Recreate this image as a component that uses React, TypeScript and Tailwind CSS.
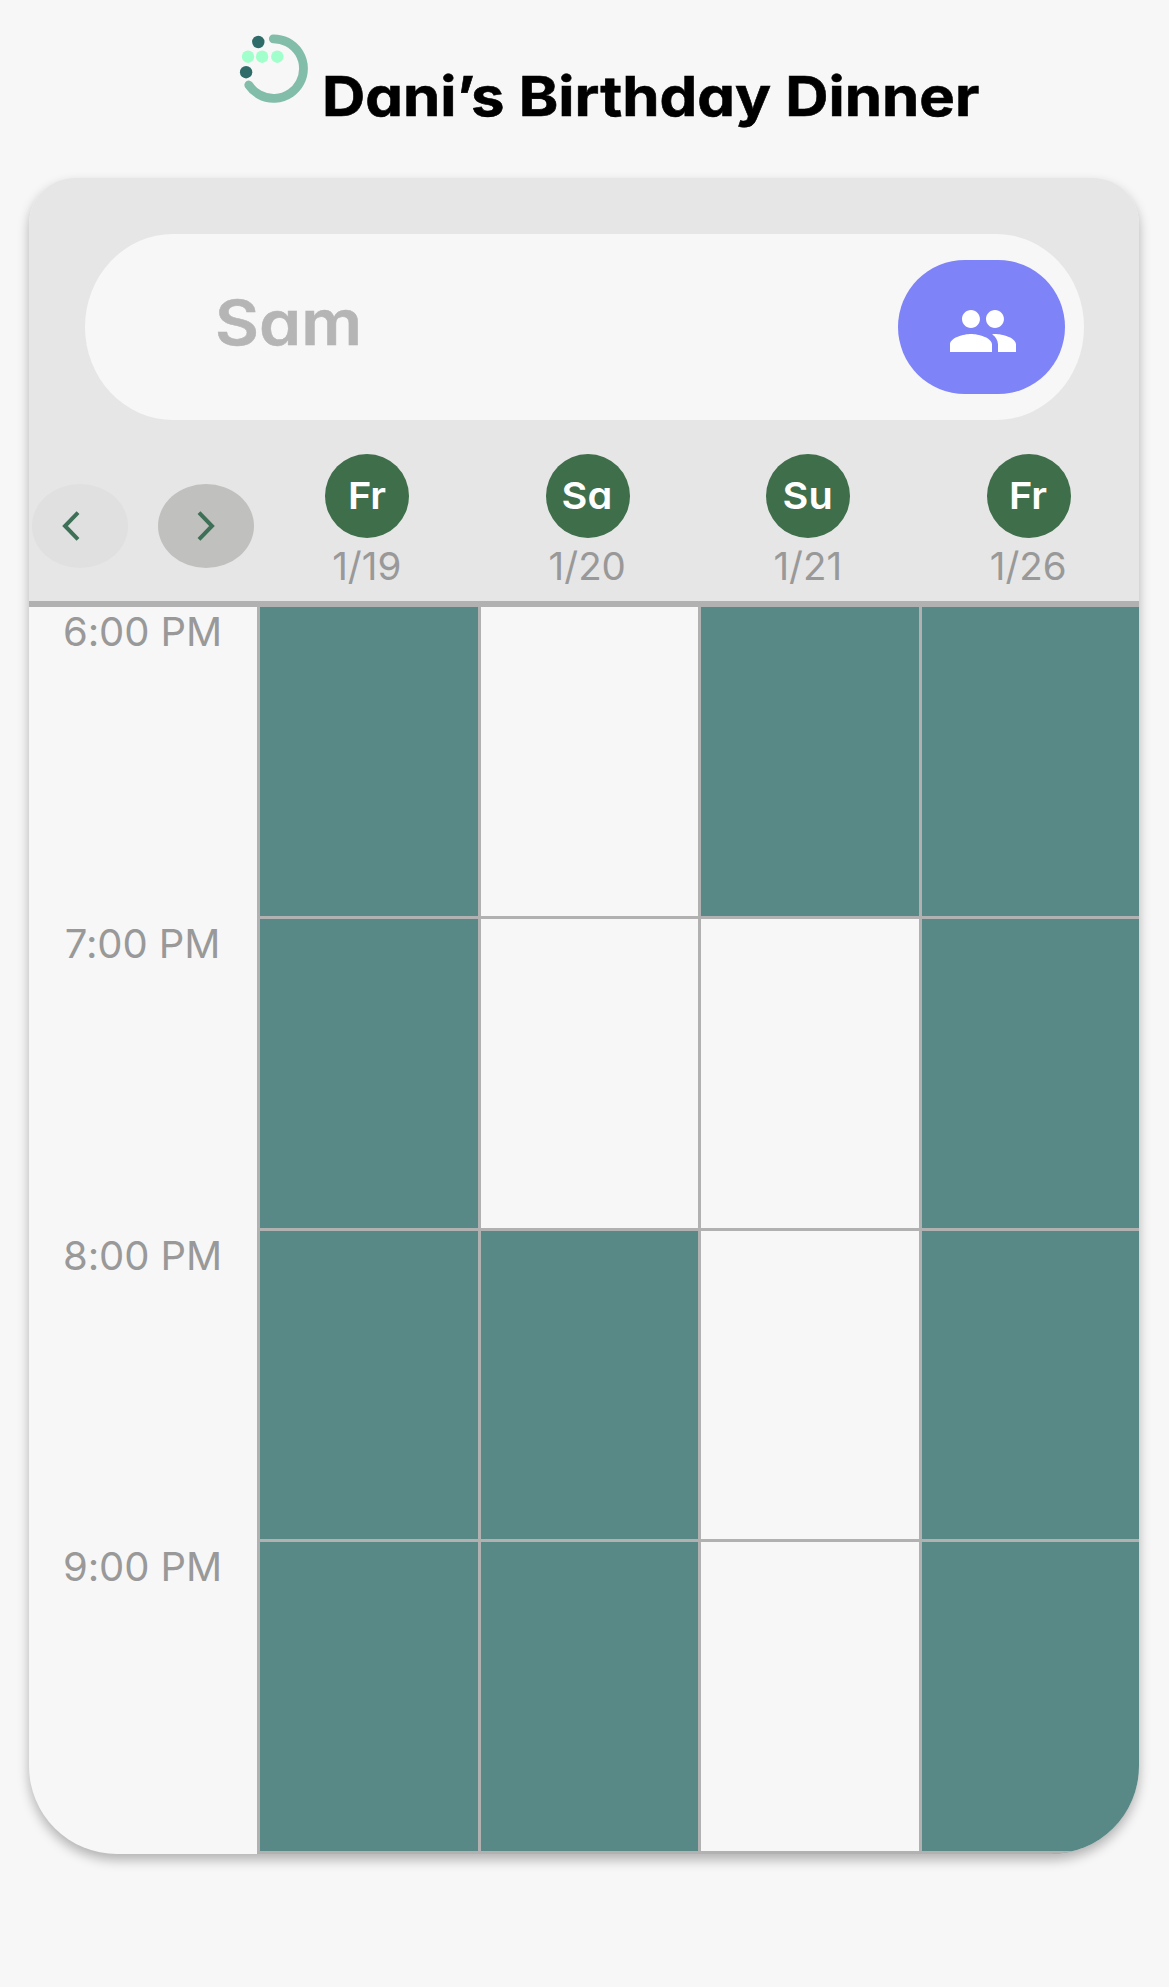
import { MdPeople } from "react-icons/md";

const days = [
  { day: "Fr", date: "1/19" },
  { day: "Sa", date: "1/20" },
  { day: "Su", date: "1/21" },
  { day: "Fr", date: "1/26" },
];

const hours = [
  { label: "6:00 PM", free: [true, false, true, true] },
  { label: "7:00 PM", free: [true, false, false, true] },
  { label: "8:00 PM", free: [true, true, false, true] },
  { label: "9:00 PM", free: [true, true, false, true] },
];

function Logo() {
  return (
    <svg className="mt-[33px] h-[72px] w-[72px] shrink-0" viewBox="0 0 72 72" fill="none">
      <path d="M35.3 5.8A29.8 29.8 0 1 1 10.8 52" stroke="#82bda9" strokeWidth="8.8" strokeLinecap="round" />
      <circle cx="20.3" cy="9" r="6.2" fill="#2f6b68" />
      <circle cx="8.1" cy="39.2" r="6.2" fill="#2f6b68" />
      <circle cx="10" cy="23.7" r="6.2" fill="#a0ffcb" />
      <circle cx="24.1" cy="23.7" r="6.2" fill="#a0ffcb" />
      <circle cx="39.3" cy="23.7" r="6.2" fill="#a0ffcb" />
    </svg>
  );
}

function Chevron({ d }: { d: string }) {
  return (
    <svg className="h-[84px] w-[96px]" viewBox="0 0 96 84" fill="none">
      <path d={d} stroke="#3d7056" strokeWidth="4" />
    </svg>
  );
}

export default function App() {
  return (
    <div className="h-[1987px] w-[1169px] overflow-hidden bg-[#f7f7f7] font-['Inter',sans-serif] [font-feature-settings:'cv11']">
      <header className="flex h-[178px] items-start pl-[238px]">
        <Logo />
        <h1 className="mt-[61px] ml-[11.5px] origin-left scale-x-[1.089] text-[55px] leading-[70px] font-bold whitespace-nowrap text-black [-webkit-text-stroke:0.6px_black]">
          Dani’s Birthday Dinner
        </h1>
      </header>
      <main className="ml-[29px] h-[1676px] w-[1110px] overflow-hidden rounded-t-[46px] rounded-b-[88px] bg-[#f7f7f7] shadow-[0_6px_12px_rgba(0,0,0,0.28)]">
        <div className="h-[429px] border-b-[6px] border-[#b1b1b1] bg-[#e6e6e6] pt-[56px]">
          <div className="ml-[56px] flex h-[186px] w-[999px] items-center justify-between rounded-[88px_/_93px] bg-[#f7f7f7] pr-[19px] pl-[130px]">
            <span className="origin-left scale-x-[1.1] pb-[8px] text-[61.5px] leading-[74px] font-semibold text-[#b5b5b5] [-webkit-text-stroke:0.5px_#b5b5b5]">Sam</span>
            <button className="flex h-[134px] w-[167px] items-center justify-center rounded-[67px] bg-[#7e83f7] pt-[8px] pl-[3px] text-white">
              <MdPeople size={72} />
            </button>
          </div>
          <div className="grid grid-cols-[228px_repeat(4,220.5px)] pt-[34px]">
            <div className="flex gap-[30px] pt-[30px] pl-[3px]">
              <button className="h-[84px] w-[96px] rounded-[50%] bg-[#e0e0e0]">
                <Chevron d="M46 28.7L33 42L46 55.3" />
              </button>
              <button className="h-[84px] w-[96px] rounded-[50%] bg-[#c0c0be]">
                <Chevron d="M41 28.7L54 42L41 55.3" />
              </button>
            </div>
            {days.map((d) => (
              <div key={d.date} className="flex flex-col items-center">
                <span className="flex h-[84px] w-[84px] items-center justify-center rounded-full bg-[#3f6e4a] text-white">
                  <span className="-ml-px scale-x-[1.06] text-[37.5px] font-semibold">{d.day}</span>
                </span>
                <span className="mt-[4px] -ml-px text-[38.5px] leading-[48px] text-[#999]">{d.date}</span>
              </div>
            ))}
          </div>
        </div>
        <div className="grid h-[1247px] grid-rows-4">
          {hours.map((h) => (
            <div key={h.label} className="grid grid-cols-[228px_repeat(4,220.5px)]">
              <div className="pt-px pr-px text-center text-[40px] leading-[48px] tracking-[-0.1px] text-[#999]">{h.label}</div>
              {h.free.map((f, i) => (
                <div
                  key={i}
                  className={f ? "border-b-3 border-l-3 border-[#b1b1b1] bg-[#598987]" : "border-b-3 border-l-3 border-[#b1b1b1]"}
                />
              ))}
            </div>
          ))}
        </div>
      </main>
    </div>
  );
}
